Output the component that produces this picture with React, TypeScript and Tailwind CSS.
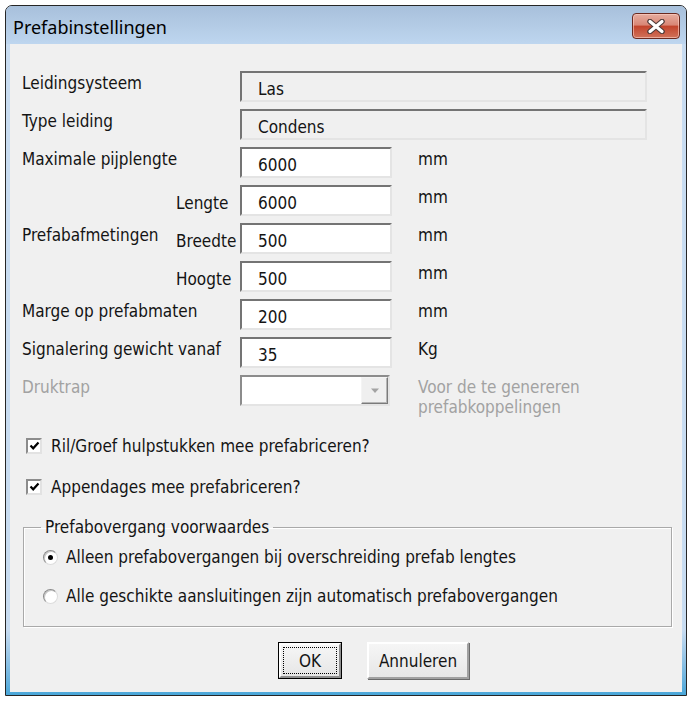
import type { ReactNode } from 'react'

function Label({ children, className = '' }: { children: ReactNode; className?: string }) {
  return <div className={`pt-[3px] leading-[18px] whitespace-nowrap ${className}`}>{children}</div>
}

function Field({ value, wide = false, disabled = false }: { value: string; wide?: boolean; disabled?: boolean }) {
  return (
    <div
      className={`h-[31px] border-2 border-t-[#747474] border-l-[#747474] border-r-[#e4e4e4] border-b-[#e4e4e4] pl-[16px] pt-[7px] leading-[18px] ${
        wide ? 'col-span-3' : ''
      } ${disabled ? 'bg-[#f0f0f0]' : 'bg-white'}`}
    >
      {value}
    </div>
  )
}

function Unit({ children }: { children: ReactNode }) {
  return <div className="col-start-5 pt-[3px] leading-[18px]">{children}</div>
}

function CheckBox({ label, className = '' }: { label: string; className?: string }) {
  return (
    <div className={`flex items-center h-[18px] gap-[9px] ml-[4px] ${className}`}>
      <div className="w-[16px] h-[16px] border-2 border-t-[#8c8c8c] border-l-[#8c8c8c] border-r-[#e2e2e2] border-b-[#e2e2e2] bg-white flex items-center justify-center">
        <svg width="11" height="10" viewBox="0 0 11 10">
          <path d="M1.5 4.5 L4.2 7.3 L9.5 1.5" fill="none" stroke="#000" strokeWidth="2.2" />
        </svg>
      </div>
      <span className="leading-[18px]">{label}</span>
    </div>
  )
}

function Radio({ label, checked = false, className = '' }: { label: string; checked?: boolean; className?: string }) {
  return (
    <div className={`flex items-center h-[18px] gap-[8px] ml-[19px] ${className}`}>
      <div className="w-[15px] h-[15px] rounded-full border border-t-[#8a8a8a] border-l-[#8a8a8a] border-r-[#dcdcdc] border-b-[#dcdcdc] bg-white flex items-center justify-center shadow-[inset_1px_1px_0_#c8c8c8]">
        {checked && <div className="w-[5px] h-[5px] rounded-full bg-black" />}
      </div>
      <span className="leading-[18px]">{label}</span>
    </div>
  )
}

export default function App() {
  return (
    <div className="w-[691px] h-[704px] bg-white pt-[5px] pl-[5px] text-[17px] text-[#141414] font-['DejaVu_Sans_Condensed','DejaVu_Sans',sans-serif] [font-stretch:condensed]">
      <div className="w-[682px] h-[691px] flex flex-col border border-[#262626] rounded-t-[7px] overflow-hidden bg-[#c3d8ee]">
        {/* Title bar */}
        <div className="h-[38px] shrink-0 flex justify-between bg-gradient-to-b from-[#a8c0db] to-[#bed6ef]">
          <div className="pl-[7px] pt-[11px] text-[18px] leading-[20px] text-black font-['Noto_Sans',sans-serif] [font-stretch:normal]">
            Prefabinstellingen
          </div>
          <div className="mt-[7px] mr-[6px] w-[48px] h-[26px] rounded-[4px] border border-[#6b2a20] bg-[linear-gradient(#e6ada0,#d98776_45%,#c3452d_52%,#d0725a)] shadow-[inset_0_0_0_1px_rgba(255,210,200,0.6)] flex items-center justify-center">
            <svg width="20" height="15" viewBox="0 0 20 15">
              <path d="M4 2.5 L16 12.5 M16 2.5 L4 12.5" stroke="#4e3a38" strokeWidth="5.5" strokeLinecap="round" />
              <path d="M4 2.5 L16 12.5 M16 2.5 L4 12.5" stroke="#fff" strokeWidth="3.2" strokeLinecap="round" />
            </svg>
          </div>
        </div>

        {/* Frame + client area */}
        <div className="flex-1 flex px-[4px] pb-[3px] bg-gradient-to-b from-[#c8dcf1] from-90% to-[#48a6d8]">
          <div className="flex-1 bg-[#f0f0f0] pl-[12px] pt-[27px] flex flex-col">
            <div className="grid grid-cols-[154px_64px_152px_26px_229px] grid-rows-[repeat(9,31px)] gap-y-[7px] w-fit">
              <Label className="col-span-2">Leidingsysteem</Label>
              <Field value="Las" wide disabled />

              <Label className="col-span-2">Type leiding</Label>
              <Field value="Condens" wide disabled />

              <Label className="col-span-2">Maximale pijplengte</Label>
              <Field value="6000" />
              <Unit>mm</Unit>

              <div className="row-span-3 self-center pb-[7px] leading-[18px]">Prefabafmetingen</div>
              <div className="pt-[9px] leading-[18px]">Lengte</div>
              <Field value="6000" />
              <Unit>mm</Unit>

              <div className="pt-[9px] leading-[18px]">Breedte</div>
              <Field value="500" />
              <Unit>mm</Unit>

              <div className="pt-[9px] leading-[18px]">Hoogte</div>
              <Field value="500" />
              <Unit>mm</Unit>

              <Label className="col-span-2">Marge op prefabmaten</Label>
              <Field value="200" />
              <Unit>mm</Unit>

              <Label className="col-span-2">Signalering gewicht vanaf</Label>
              <Field value="35" />
              <Unit>Kg</Unit>

              <Label className="col-span-2 text-[#a2a2a2]">Druktrap</Label>
              <div className="h-[31px] w-[150px] border-2 border-t-[#8c8c8c] border-l-[#8c8c8c] border-r-[#e4e4e4] border-b-[#e4e4e4] bg-white flex justify-end">
                <div className="w-[27px] h-full border border-t-[#f4f4f4] border-l-[#f4f4f4] border-r-[#7a7a7a] border-b-[#7a7a7a] bg-[#efefef] flex items-center justify-center shadow-[inset_-1px_-1px_0_#b5b5b5]">
                  <svg width="10" height="6" viewBox="0 0 10 6">
                    <path d="M1 0.5 L9 0.5 L5 5 Z" fill="#a3a3a3" />
                  </svg>
                </div>
              </div>
              <div className="col-start-5 pt-[2px] leading-[20px] text-[#a2a2a2] whitespace-nowrap">
                Voor de te genereren
                <br />
                prefabkoppelingen
              </div>
            </div>

            <CheckBox label="Ril/Groef hulpstukken mee prefabriceren?" className="mt-[31px]" />
            <CheckBox label="Appendages mee prefabriceren?" className="mt-[23px]" />

            <fieldset className="mt-[22px] ml-[1px] w-[649px] border border-[#a9a9a9] shadow-[inset_1px_1px_0_#fff,1px_1px_0_#fff] pb-[21px]">
              <legend className="ml-[17px] px-[4px] leading-[18px]">Prefabovergang voorwaardes</legend>
              <Radio label="Alleen prefabovergangen bij overschreiding prefab lengtes" checked className="mt-[12px]" />
              <Radio label="Alle geschikte aansluitingen zijn automatisch prefabovergangen" className="mt-[21px]" />
            </fieldset>

            <div className="flex gap-[25px] ml-[256px] mt-[15px]">
              <div className="w-[64px] h-[37px] border border-black">
                <div className="h-full border-2 border-t-white border-l-white border-r-[#8f8f8f] border-b-[#8f8f8f] bg-gradient-to-b from-[#f6f6f6] to-[#e6e6e6] p-[2px]">
                  <div className="h-full border border-dotted border-black flex items-center justify-center leading-[18px]">
                    OK
                  </div>
                </div>
              </div>
              <div className="w-[102px] h-[37px] border-2 border-t-white border-l-white border-r-[#a0a0a0] border-b-[#a0a0a0] bg-gradient-to-b from-[#f6f6f6] to-[#e6e6e6] shadow-[1px_1px_0_#6a6a6a] flex items-center justify-center leading-[18px]">
                Annuleren
              </div>
            </div>
          </div>
        </div>
      </div>
    </div>
  )
}
